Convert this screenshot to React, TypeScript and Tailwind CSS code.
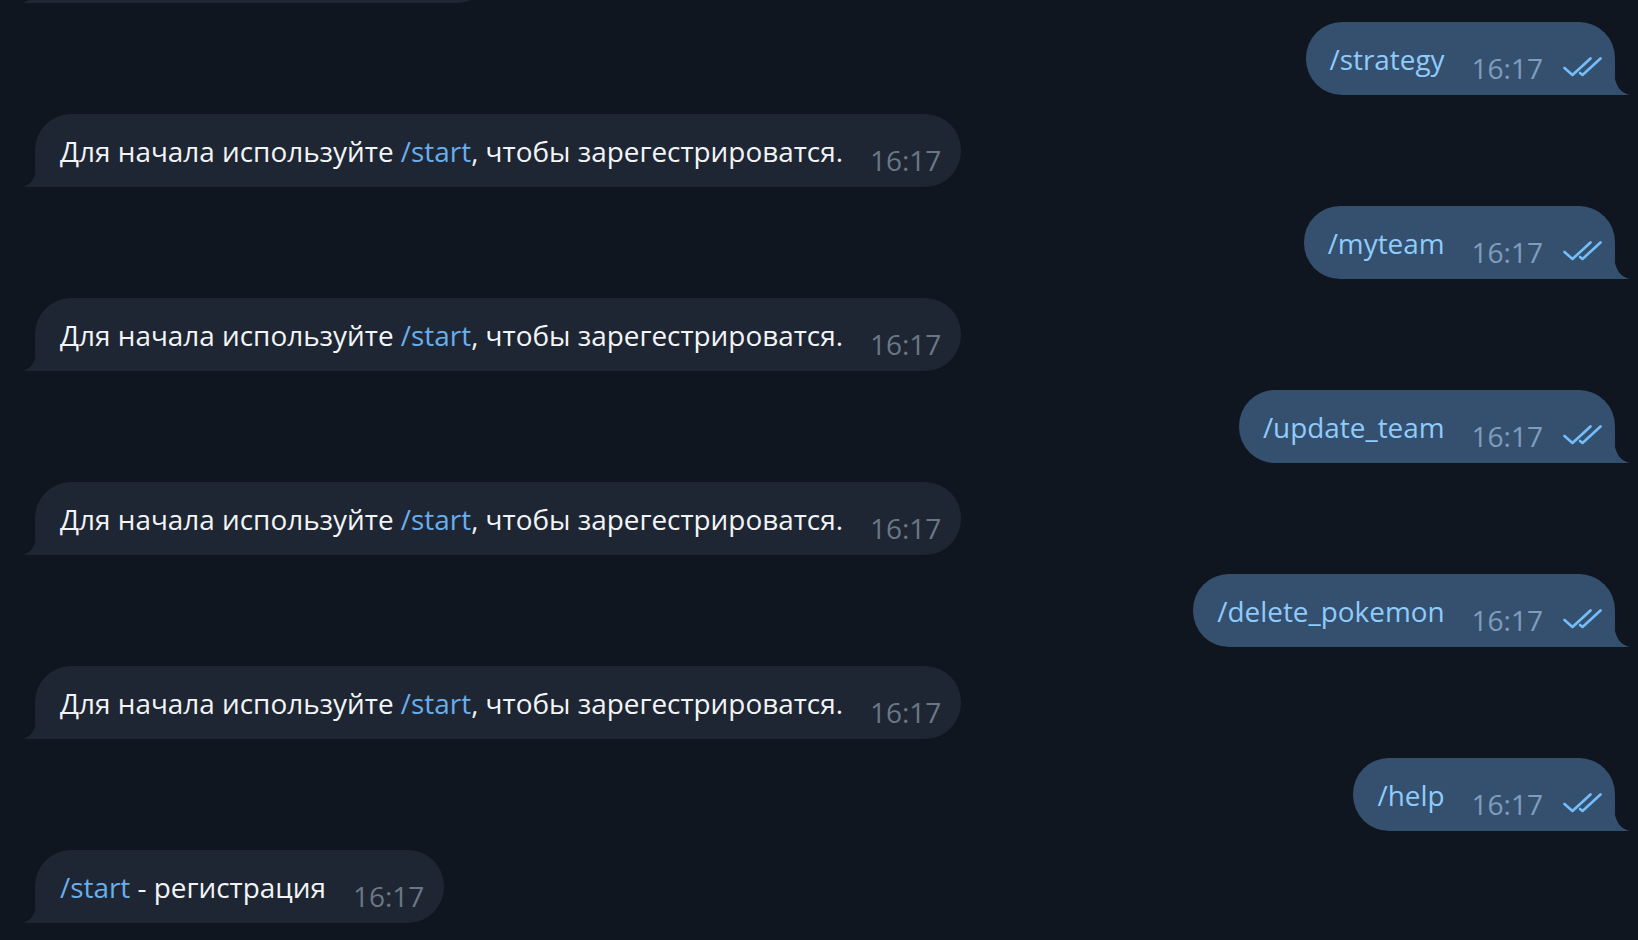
import React from "react";

type Part = { text: string; link?: boolean };

type Message = {
  id: number;
  out: boolean;
  parts: Part[];
  time: string;
  width?: string;
};

const start: Part[] = [
  { text: "Для начала используйте " },
  { text: "/start", link: true },
  { text: ", чтобы зарегестрироватся." },
];

const messages: Message[] = [
  { id: 0, out: false, parts: [], time: "", width: "w-[458px]" },
  { id: 1, out: true, parts: [{ text: "/strategy" }], time: "16:17" },
  { id: 2, out: false, parts: start, time: "16:17" },
  { id: 3, out: true, parts: [{ text: "/myteam" }], time: "16:17" },
  { id: 4, out: false, parts: start, time: "16:17" },
  { id: 5, out: true, parts: [{ text: "/update_team" }], time: "16:17" },
  { id: 6, out: false, parts: start, time: "16:17" },
  { id: 7, out: true, parts: [{ text: "/delete_pokemon" }], time: "16:17" },
  { id: 8, out: false, parts: start, time: "16:17" },
  { id: 9, out: true, parts: [{ text: "/help" }], time: "16:17" },
  { id: 10, out: false, parts: [{ text: "/start", link: true }, { text: " - регистрация" }], time: "16:17" },
];

function Checks() {
  return (
    <svg width="40" height="20" viewBox="0 0 40 20" fill="none" className="mt-[35px] ml-[20px] shrink-0">
      <path d="M1.5 11 L9.5 18 L27.5 1.5" stroke="#74bdf8" strokeWidth="2.6" strokeLinecap="round" strokeLinejoin="round" />
      <path d="M17 16 L19.5 18 L37.5 1.5" stroke="#74bdf8" strokeWidth="2.6" strokeLinecap="round" strokeLinejoin="round" />
    </svg>
  );
}

function Tail({ out }: { out: boolean }) {
  if (out) {
    return (
      <svg width="16" height="24" viewBox="0 0 16 24" className="absolute bottom-0 right-[-15px]">
        <path d="M0 0 Q1 21 16 24 L0 24 Z" fill="#35506e" />
      </svg>
    );
  }
  return (
    <svg width="15" height="24" viewBox="0 0 15 24" className="absolute bottom-0 left-[-13px]">
      <path d="M15 0 Q14 21 0 24 L15 24 Z" fill="#1d2632" />
    </svg>
  );
}

function Bubble({ msg }: { msg: Message }) {
  const body = msg.out
    ? "bg-[#35506e] rounded-[36px] rounded-br-none pl-[24px] pr-[12px]"
    : "bg-[#1d2632] rounded-[36px] rounded-bl-none pl-[25px] pr-[20px]";

  return (
    <div className={`flex ${msg.out ? "justify-end pr-[23px]" : "justify-start pl-[35px]"}`}>
      <div className={`relative flex h-[73px] items-start ${body} ${msg.width ?? ""}`}>
        <Tail out={msg.out} />
        {msg.parts.length > 0 && (
          <span
            className={`mt-[18px] whitespace-nowrap text-[27.9px] leading-[38px] ${
              msg.out ? "text-[#8fcbfb]" : "text-[#f3f4f6]"
            }`}
          >
            {msg.parts.map((p, i) =>
              p.link ? (
                <span key={i} className="text-[#6aaeec]">
                  {p.text}
                </span>
              ) : (
                <span key={i}>{p.text}</span>
              )
            )}
          </span>
        )}
        {msg.time && (
          <span
            className={`ml-[27px] mt-[27px] whitespace-nowrap text-[28px] leading-[38px] ${
              msg.out ? "text-[#7f9dbd]" : "text-[#6b7785]"
            }`}
          >
            {msg.time}
          </span>
        )}
        {msg.out && <Checks />}
      </div>
    </div>
  );
}

export default function App() {
  return (
    <div className="h-[940px] w-full overflow-hidden bg-[#0f161f] font-['Open_Sans',sans-serif]">
      <div className="mt-[-70px] flex flex-col gap-[19px]">
        {messages.map((m) => (
          <Bubble key={m.id} msg={m} />
        ))}
      </div>
    </div>
  );
}
